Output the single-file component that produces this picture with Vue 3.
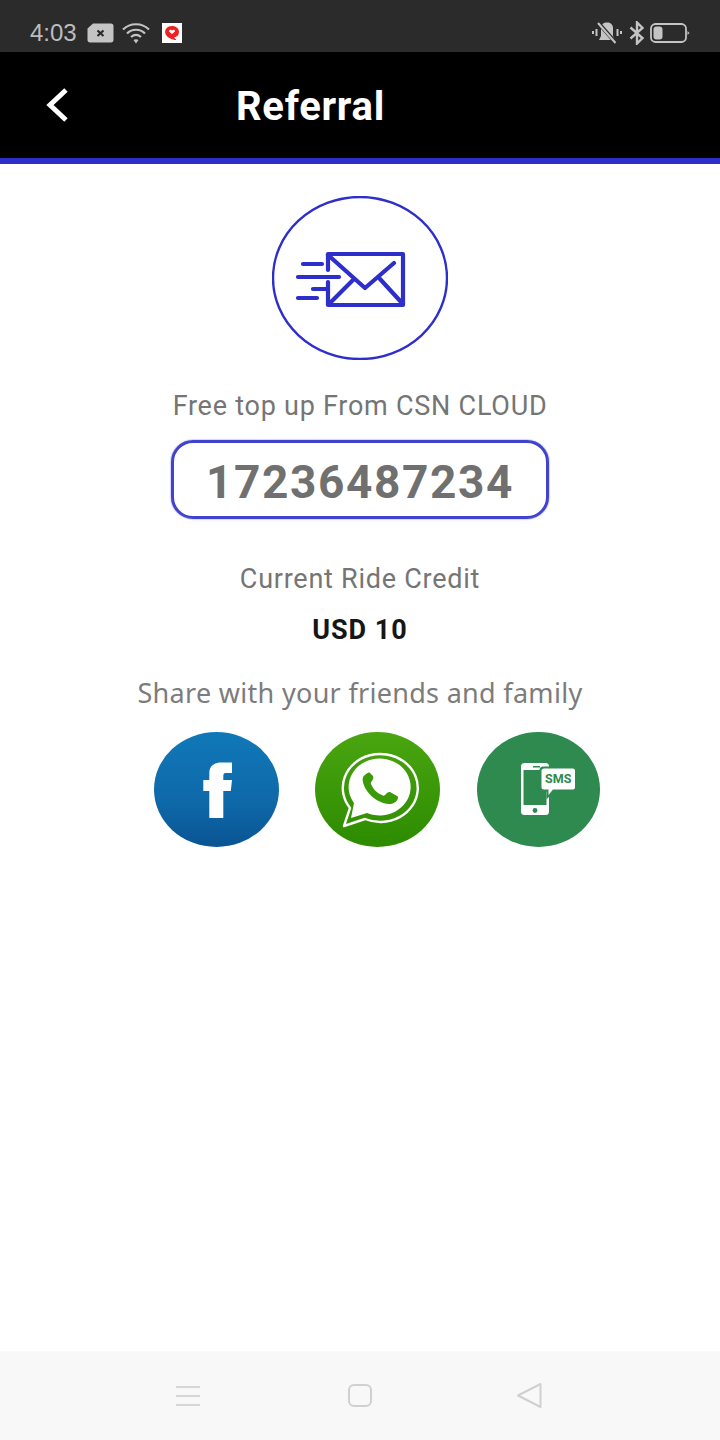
<script setup>
const shareTitle = "Share with your friends and family";
</script>

<template>
  <div class="screen">
    <div class="status-bar">
      <span class="time">4:03</span>
      <svg class="ic-msg" viewBox="0 0 27 20" aria-hidden="true">
        <path d="M6 0.5H24C25.5 0.5 26.5 1.5 26.5 3V17C26.5 18.5 25.5 19.5 24 19.5H3C1.5 19.5 0.5 18.5 0.5 17V5.5Z" fill="#c4c4c4" />
        <path d="M10.5 7.5L16.5 13M16.5 7.5L10.5 13" stroke="#2b2b2b" stroke-width="2.2" />
      </svg>
      <svg class="ic-wifi" viewBox="0 0 28 22" fill="none" stroke="#c4c4c4" aria-hidden="true">
        <path d="M1 7.5C8 0.5 20 0.5 27 7.5" stroke-width="2.2" />
        <path d="M5 11.5C10 6.5 18 6.5 23 11.5" stroke-width="2.2" />
        <path d="M9 15C12 12.5 16 12.5 19 15" stroke-width="2.2" />
        <path d="M11.5 18L14 21.5L16.5 18C15 17 13 17 11.5 18Z" fill="#c4c4c4" stroke="none" />
      </svg>
      <svg class="ic-app" viewBox="0 0 20 20" aria-hidden="true">
        <rect width="20" height="20" fill="#fff" />
        <path d="M10 3C14 3 17 5.5 17 9C17 12 15 14 12 14.5L14.5 17C10 17 5 14.5 3.5 11C2 6.5 5.5 3 10 3Z" fill="#ee2020" />
        <path d="M10 11L7 8.4C6.8 6.8 9 6 10 7.6C11 6 13.2 6.8 13 8.4Z" fill="#fff" />
      </svg>
      <span class="status-space"></span>
      <svg class="ic-vibrate" viewBox="0 0 32 24" fill="none" aria-hidden="true">
        <path d="M10 7C10 3.5 12.5 1.5 16 1.5C19.5 1.5 22 3.5 22 7V15L24 19H8L10 15Z" fill="#c4c4c4" />
        <path d="M5.5 8V15M2 10V13M26.5 8V15M30 10V13" stroke="#c4c4c4" stroke-width="2" />
        <path d="M7 1.5L25 22" stroke="#2b2b2b" stroke-width="4" />
        <path d="M7 2L24.5 22" stroke="#c4c4c4" stroke-width="2" />
      </svg>
      <svg class="ic-bt" viewBox="0 0 16 24" fill="none" aria-hidden="true">
        <path d="M1.5 6.5L13.5 17L8 22.5V1.5L13.5 7L1.5 17.5" stroke="#c4c4c4" stroke-width="2.4" />
      </svg>
      <svg class="ic-battery" viewBox="0 0 40 20" fill="none" aria-hidden="true">
        <rect x="1" y="1" width="35" height="18" rx="4.5" stroke="#c4c4c4" stroke-width="1.8" />
        <rect x="3.5" y="3.5" width="9" height="13" rx="3" fill="#c4c4c4" />
        <path d="M37.5 8V12L39.5 10Z" fill="#c4c4c4" />
      </svg>
    </div>

    <header class="top-bar">
      <svg class="back" viewBox="0 0 24 36" fill="none" aria-hidden="true">
        <path d="M21 3L5 18L21 33" stroke="#fff" stroke-width="5" />
      </svg>
      <h1 class="title">Referral</h1>
    </header>

    <main class="content">
      <svg class="mail" viewBox="0 0 176 164" fill="none" stroke="#2e2ecb" aria-hidden="true">
        <ellipse cx="88" cy="82" rx="87" ry="81" stroke-width="2.4" />
        <g stroke-width="4.2" stroke-linecap="round" stroke-linejoin="round">
          <path d="M56 74V58H131V109H56V86" />
          <path d="M56 59L93 92L122 67M57 108L81 84M108 83L130 107" />
          <path d="M31 68H50M26 81H67M41 93H56M26 102H45" />
        </g>
      </svg>

      <p class="label free">Free top up From CSN CLOUD</p>
      <div class="code">17236487234</div>
      <p class="label credit">Current Ride Credit</p>
      <p class="amount">USD 10</p>
      <p class="share">{{ shareTitle }}</p>

      <div class="share-row">
        <svg class="social fb" viewBox="0 0 125 115" aria-hidden="true">
          <defs>
            <linearGradient id="fbFill" x1="0" y1="0" x2="0" y2="1">
              <stop offset="0" stop-color="#1078b8" />
              <stop offset="0.6" stop-color="#0e69a9" />
              <stop offset="1" stop-color="#0a5493" />
            </linearGradient>
          </defs>
          <ellipse cx="62.5" cy="57.5" rx="62.5" ry="57.5" fill="url(#fbFill)" />
          <path d="M69.3 86H55.3V59H49.3V48H55.3V41C55.3 34 60 30.5 67 30.5H78V41H71.5C70 41 69.3 42 69.3 44V48H78L76.8 59H69.3Z" fill="#fff" />
        </svg>

        <svg class="social wa" viewBox="0 0 125 115" aria-hidden="true">
          <defs>
            <linearGradient id="waFill" x1="0" y1="0" x2="0" y2="1">
              <stop offset="0" stop-color="#4aa510" />
              <stop offset="1" stop-color="#2d8b00" />
            </linearGradient>
          </defs>
          <ellipse cx="62.5" cy="57.5" rx="62.5" ry="57.5" fill="url(#waFill)" />
          <path d="M35 76L29 94L50 87A37.5 34 0 1 0 35 76Z" fill="none" stroke="#fff" stroke-width="2.4" stroke-linejoin="round" />
          <path d="M39 71L36 86L52 81A31 28.5 0 1 0 39 71Z" fill="#fff" />
          <path d="M50 43C48 44 47 47 48 50C50 60 61 71 74 72C78 72 82 70 83 66C83 65 83 64 82 64L75 60C74 60 73 60 72 61L70 63C69 64 68 64 67 63C62 61 58 57 56 52C55.5 51 56 50 57 49L58 47C58.5 46 58.5 45 58 44L55 41C54 40 52 41 50 43Z" fill="#3a9a08" />
        </svg>

        <svg class="social sms" viewBox="0 0 123 115" aria-hidden="true">
          <ellipse cx="61.5" cy="57.5" rx="61.5" ry="57.5" fill="#2e8a4e" />
          <rect x="44" y="31" width="28" height="52" rx="3.5" fill="#fff" />
          <rect x="46.5" y="38" width="23" height="35" fill="#2e8a4e" />
          <rect x="56" y="34" width="7" height="1.5" fill="#2e8a4e" />
          <circle cx="58" cy="78.5" r="2.4" fill="#2e8a4e" />
          <path d="M66 34.5H97C98.5 34.5 100 36 100 37.5V56.5C100 58 98.5 59.5 97 59.5H77L69.5 67.5V59.5H66C64 59.5 62.5 58 62.5 56.5V37.5C62.5 36 64 34.5 66 34.5Z" fill="#2e8a4e" />
          <path d="M67 36.5H96C97 36.5 98 37.5 98 38.5V55.5C98 56.5 97 57.5 96 57.5H76L71.5 63V57.5H67C65.5 57.5 64.5 56.5 64.5 55.5V38.5C64.5 37.5 65.5 36.5 67 36.5Z" fill="#fff" />
          <text x="81.2" y="51.4" class="sms-text">SMS</text>
        </svg>
      </div>
    </main>

    <nav class="nav-bar">
      <svg class="nav-menu" viewBox="0 0 24 20" fill="none" stroke="#d6d6d6" stroke-width="2" aria-hidden="true">
        <path d="M0 1H24M0 10H24M0 19H24" />
      </svg>
      <svg class="nav-home" viewBox="0 0 24 23" fill="none" stroke="#d0d0d0" stroke-width="2" aria-hidden="true">
        <rect x="1" y="1" width="22" height="21" rx="5" />
      </svg>
      <svg class="nav-back" viewBox="0 0 25 25" fill="none" stroke="#d0d0d0" stroke-width="2" stroke-linejoin="round" aria-hidden="true">
        <path d="M1 12.5L23.5 1V24Z" />
      </svg>
    </nav>
  </div>
</template>

<style>
html,
body {
  margin: 0;
  background: #fff;
}
</style>

<style scoped>
.screen {
  width: 720px;
  height: 1440px;
  display: flex;
  flex-direction: column;
  overflow: hidden;
  background: #fff;
  font-family: Roboto, "Liberation Sans", sans-serif;
}

.status-bar {
  height: 52px;
  flex: none;
  display: flex;
  align-items: center;
  padding: 14px 30px 0 30px;
  box-sizing: border-box;
  background: #2b2b2b;
}

.time {
  width: 57px;
  font-family: "Liberation Sans", sans-serif;
  font-size: 24px;
  line-height: 28px;
  color: #bdbdbd;
}

.ic-msg {
  width: 27px;
  height: 20px;
}

.ic-wifi {
  width: 28px;
  height: 22px;
  margin-left: 8px;
}

.ic-app {
  width: 20px;
  height: 20px;
  margin-left: 12px;
}

.status-space {
  flex: 1;
}

.ic-vibrate {
  width: 32px;
  height: 24px;
  margin-right: 2px;
}

.ic-bt {
  width: 16px;
  height: 24px;
  margin-left: 4px;
}

.ic-battery {
  width: 40px;
  height: 20px;
  margin-left: 5px;
}

.top-bar {
  height: 112px;
  flex: none;
  display: flex;
  align-items: center;
  box-sizing: border-box;
  padding: 0 0 0 45px;
  background: #000;
  border-bottom: 6px solid #2e2ecb;
}

.back {
  width: 24px;
  height: 36px;
}

.title {
  margin: 4px 0 0 167px;
  font-size: 40px;
  line-height: 44px;
  font-weight: 700;
  letter-spacing: 0.7px;
  color: #fff;
}

.content {
  flex: 1;
  display: flex;
  flex-direction: column;
  align-items: center;
  padding-top: 32px;
}

.mail {
  width: 176px;
  height: 164px;
}

.label {
  margin: 0;
  font-size: 27px;
  line-height: 36px;
  letter-spacing: 0.75px;
  color: #757575;
}

.free {
  margin-top: 28px;
}

.code {
  width: 378px;
  height: 79px;
  margin-top: 16px;
  padding-top: 4px;
  box-sizing: border-box;
  display: flex;
  align-items: center;
  justify-content: center;
  border: 3px solid #4242d0;
  border-radius: 22px;
  box-shadow: 0 0 1.5px #4242d0;
  font-size: 46px;
  font-weight: 700;
  letter-spacing: 1.6px;
  color: #707070;
}

.credit {
  margin-top: 42px;
}

.amount {
  margin: 15px 0 0;
  font-size: 27px;
  line-height: 36px;
  font-weight: 700;
  letter-spacing: 1px;
  color: #161616;
}

.share {
  margin: 27px 0 0;
  font-family: "Noto Sans", sans-serif;
  font-size: 27px;
  line-height: 36px;
  letter-spacing: 0.3px;
  color: #7c7c7c;
}

.share-row {
  align-self: flex-start;
  display: flex;
  gap: 36px;
  margin-top: 21px;
  margin-left: 154px;
}

.social {
  width: 125px;
  height: 115px;
}

.sms {
  width: 123px;
  margin-left: 1px;
}

.sms-text {
  font-size: 12.5px;
  font-weight: 700;
  text-anchor: middle;
  fill: #2e8a4e;
}

.nav-bar {
  height: 89px;
  flex: none;
  display: flex;
  align-items: center;
  box-sizing: border-box;
  padding-left: 176px;
  background: #f8f8f8;
}

.nav-menu {
  width: 24px;
  height: 20px;
}

.nav-home {
  width: 24px;
  height: 23px;
  margin-left: 148px;
}

.nav-back {
  width: 25px;
  height: 25px;
  margin-left: 145px;
}
</style>
